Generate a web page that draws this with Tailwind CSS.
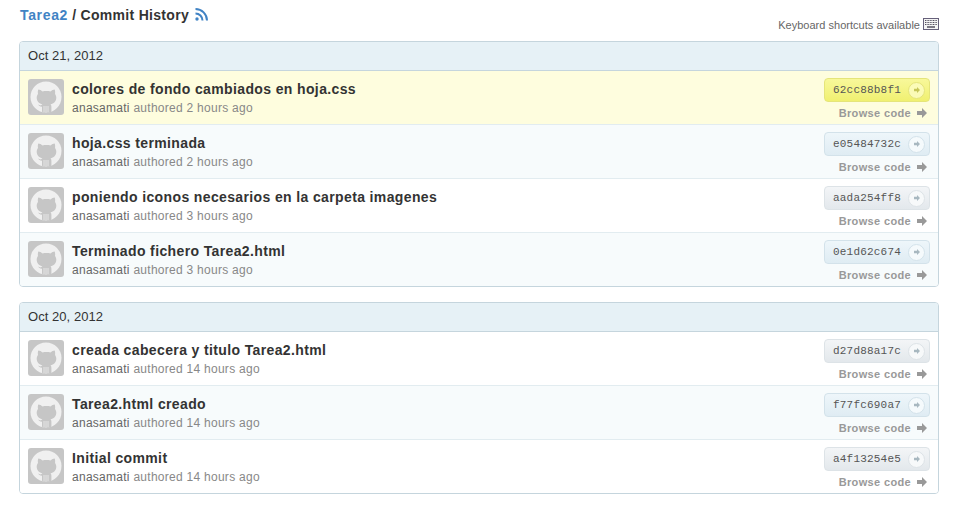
<!DOCTYPE html>
<html lang="en">
<head>
    <meta charset="UTF-8">
    <title>Commit History</title>
    <script src="https://cdn.jsdelivr.net/npm/@tailwindcss/browser@4"></script>
</head>
<body class="bg-white font-['Liberation_Sans',Arial,sans-serif] text-[#333] w-[957px] h-[526px] overflow-hidden">

    <!-- shared icons -->
    <svg class="hidden">
        <symbol id="octo" viewBox="0 0 36 36">
            <circle cx="18" cy="18" r="15.500" fill="#f0f0f0"/>
            <path d="M18 33.500c-1.500 0-3-.3-4-.7v-5.100c-2-.1-3.200-1-4-2.200l2.800.9 1.600-1.200c-3-.7-5.700-2.700-5.700-6.500 0-1.500.5-2.800 1.300-3.800-.3-1.100-.2-3 .3-4.400 1.500.1 3 .9 4.200 1.900 1.300-.3 2.800-.3 4-.3s2.700 0 4 .3c1.200-1 2.700-1.800 4.200-1.900.5 1.400.6 3.300.3 4.400.8 1 1.300 2.300 1.300 3.800 0 3.800-2.700 5.800-5.700 6.500.6.700.8 1.500.8 2.500v5.100c-1 .4-1.900.7-3.400.7z" fill="#c6c6c6"/>
            <path d="M16 27v6M18 27v6.500M20 27v6" stroke="#f0f0f0" stroke-width=".8" fill="none"/>
        </symbol>
        <symbol id="arrow" viewBox="0 0 10 10">
            <path d="M0 3h5V0l5 5-5 5V7H0z" fill="currentColor"/>
        </symbol>
    </svg>

    <div class="relative h-[41px]">
        <h1 class="absolute left-[20px] top-[6px] flex items-center text-[14px] leading-[18px] font-bold text-[#333] tracking-[0.3px]">
            <span class="text-[#4183c4] tracking-[0.65px]">Tarea2</span><span class="whitespace-pre"> / Commit History</span>
            <svg class="ml-[6px] w-[13px] h-[13px] mb-[2px]" viewBox="0 0 13 13">
                <circle cx="2" cy="11" r="1.700" fill="#4183c4"/>
                <path d="M0.500 5.500a7 7 0 0 1 7 7M0.500 1a11.500 11.500 0 0 1 11.500 11.500" fill="none" stroke="#4183c4" stroke-width="2"/>
            </svg>
        </h1>
        <div class="absolute right-[18px] top-[17px] flex items-center text-[11px] leading-[16px] text-[#666]">
            <span class="tracking-[0.02px]">Keyboard shortcuts available</span>
            <svg class="ml-[3px] w-[16px] h-[12px] mb-[3px]" viewBox="0 0 16 12">
                <rect x=".5" y=".5" width="15" height="11" fill="#f4f4f4" stroke="#66607a"/>
                <path d="M2 2.500h12M2 4.500h12M2 6.500h12" stroke="#55505f" stroke-dasharray="1 .6" fill="none"/>
                <path d="M4 9h8" stroke="#55505f" stroke-width="1.500"/>
            </svg>
        </div>
    </div>

    <div class="ml-[19px] w-[920px] border border-[#c5d5dd] rounded-[4px] overflow-hidden">
        <h3 class="h-[29px] px-[8px] flex items-center bg-[#e6f1f6] border-b border-[#c5d5dd] text-[13px] tracking-[0.05px] text-[#333]">Oct 21, 2012</h3>

        <div class="h-[54px] flex justify-between pl-[8px] pr-[8px] pt-[8px] bg-[#fefdde] border-b border-[#e2ecf0]">
            <svg class="w-[36px] h-[36px] bg-[#c6c6c6] rounded-[3px] shrink-0"><use href="#octo"/></svg>
            <div class="ml-[8px] flex-1 pt-[1px]">
                <p class="text-[14px] leading-[19px] font-bold text-[#333] tracking-[0.37px]">colores de fondo cambiados en hoja.css</p>
                <p class="text-[12px] leading-[18px] tracking-[0.27px] text-[#888]"><span class="text-[#666]">anasamati</span> authored 2 hours ago</p>
            </div>
            <div class="flex flex-col items-end -mt-[1px]">
                <div class="w-[106px] h-[24px] flex items-center justify-between pl-[8px] pr-[4px] rounded-[4px] border border-[#e5e57a] bg-linear-to-b from-[#f8f89a] to-[#f0f070] font-['Liberation_Mono',monospace] text-[11px] tracking-[0.2px] text-[#555]">62cc88b8f1<span class="w-[17px] h-[17px] rounded-full border border-[#e5e57a] bg-[#fbfbb8] flex items-center justify-center text-[#c6c65a]"><svg class="w-[6px] h-[6px]"><use href="#arrow"/></svg></span></div>
                <div class="mt-[3px] mr-[3px] flex items-center text-[11px] leading-[16px] font-bold tracking-[0.35px] text-[#999]">Browse code<svg class="ml-[6px] w-[10px] h-[10px]"><use href="#arrow"/></svg></div>
            </div>
        </div>

        <div class="h-[54px] flex justify-between pl-[8px] pr-[8px] pt-[8px] bg-[#f7fbfc] border-b border-[#e2ecf0]">
            <svg class="w-[36px] h-[36px] bg-[#c6c6c6] rounded-[3px] shrink-0"><use href="#octo"/></svg>
            <div class="ml-[8px] flex-1 pt-[1px]">
                <p class="text-[14px] leading-[19px] font-bold text-[#333] tracking-[0.37px]">hoja.css terminada</p>
                <p class="text-[12px] leading-[18px] tracking-[0.27px] text-[#888]"><span class="text-[#666]">anasamati</span> authored 2 hours ago</p>
            </div>
            <div class="flex flex-col items-end -mt-[1px]">
                <div class="w-[106px] h-[24px] flex items-center justify-between pl-[8px] pr-[4px] rounded-[4px] border border-[#d3e2ea] bg-linear-to-b from-[#eef6fa] to-[#dfecf3] font-['Liberation_Mono',monospace] text-[11px] tracking-[0.2px] text-[#555]">e05484732c<span class="w-[17px] h-[17px] rounded-full border border-[#d3e2ea] bg-[#f5fafc] flex items-center justify-center text-[#a8b8c0]"><svg class="w-[6px] h-[6px]"><use href="#arrow"/></svg></span></div>
                <div class="mt-[3px] mr-[3px] flex items-center text-[11px] leading-[16px] font-bold tracking-[0.35px] text-[#999]">Browse code<svg class="ml-[6px] w-[10px] h-[10px]"><use href="#arrow"/></svg></div>
            </div>
        </div>

        <div class="h-[54px] flex justify-between pl-[8px] pr-[8px] pt-[8px] bg-white border-b border-[#e2ecf0]">
            <svg class="w-[36px] h-[36px] bg-[#c6c6c6] rounded-[3px] shrink-0"><use href="#octo"/></svg>
            <div class="ml-[8px] flex-1 pt-[1px]">
                <p class="text-[14px] leading-[19px] font-bold text-[#333] tracking-[0.37px]">poniendo iconos necesarios en la carpeta imagenes</p>
                <p class="text-[12px] leading-[18px] tracking-[0.27px] text-[#888]"><span class="text-[#666]">anasamati</span> authored 3 hours ago</p>
            </div>
            <div class="flex flex-col items-end -mt-[1px]">
                <div class="w-[106px] h-[24px] flex items-center justify-between pl-[8px] pr-[4px] rounded-[4px] border border-[#dde3e7] bg-linear-to-b from-[#f3f5f7] to-[#e3e8ec] font-['Liberation_Mono',monospace] text-[11px] tracking-[0.2px] text-[#555]">aada254ff8<span class="w-[17px] h-[17px] rounded-full border border-[#dde3e7] bg-[#f7f9fa] flex items-center justify-center text-[#a8b8c0]"><svg class="w-[6px] h-[6px]"><use href="#arrow"/></svg></span></div>
                <div class="mt-[3px] mr-[3px] flex items-center text-[11px] leading-[16px] font-bold tracking-[0.35px] text-[#999]">Browse code<svg class="ml-[6px] w-[10px] h-[10px]"><use href="#arrow"/></svg></div>
            </div>
        </div>

        <div class="h-[53px] flex justify-between pl-[8px] pr-[8px] pt-[8px] bg-[#f7fbfc]">
            <svg class="w-[36px] h-[36px] bg-[#c6c6c6] rounded-[3px] shrink-0"><use href="#octo"/></svg>
            <div class="ml-[8px] flex-1 pt-[1px]">
                <p class="text-[14px] leading-[19px] font-bold text-[#333] tracking-[0.37px]">Terminado fichero Tarea2.html</p>
                <p class="text-[12px] leading-[18px] tracking-[0.27px] text-[#888]"><span class="text-[#666]">anasamati</span> authored 3 hours ago</p>
            </div>
            <div class="flex flex-col items-end -mt-[1px]">
                <div class="w-[106px] h-[24px] flex items-center justify-between pl-[8px] pr-[4px] rounded-[4px] border border-[#d3e2ea] bg-linear-to-b from-[#eef6fa] to-[#dfecf3] font-['Liberation_Mono',monospace] text-[11px] tracking-[0.2px] text-[#555]">0e1d62c674<span class="w-[17px] h-[17px] rounded-full border border-[#d3e2ea] bg-[#f5fafc] flex items-center justify-center text-[#a8b8c0]"><svg class="w-[6px] h-[6px]"><use href="#arrow"/></svg></span></div>
                <div class="mt-[3px] mr-[3px] flex items-center text-[11px] leading-[16px] font-bold tracking-[0.35px] text-[#999]">Browse code<svg class="ml-[6px] w-[10px] h-[10px]"><use href="#arrow"/></svg></div>
            </div>
        </div>
    </div>

    <div class="mt-[15px] ml-[19px] w-[920px] border border-[#c5d5dd] rounded-[4px] overflow-hidden">
        <h3 class="h-[29px] px-[8px] flex items-center bg-[#e6f1f6] border-b border-[#c5d5dd] text-[13px] tracking-[0.05px] text-[#333]">Oct 20, 2012</h3>

        <div class="h-[54px] flex justify-between pl-[8px] pr-[8px] pt-[8px] bg-white border-b border-[#e2ecf0]">
            <svg class="w-[36px] h-[36px] bg-[#c6c6c6] rounded-[3px] shrink-0"><use href="#octo"/></svg>
            <div class="ml-[8px] flex-1 pt-[1px]">
                <p class="text-[14px] leading-[19px] font-bold text-[#333] tracking-[0.37px]">creada cabecera y titulo Tarea2.html</p>
                <p class="text-[12px] leading-[18px] tracking-[0.27px] text-[#888]"><span class="text-[#666]">anasamati</span> authored 14 hours ago</p>
            </div>
            <div class="flex flex-col items-end -mt-[1px]">
                <div class="w-[106px] h-[24px] flex items-center justify-between pl-[8px] pr-[4px] rounded-[4px] border border-[#dde3e7] bg-linear-to-b from-[#f3f5f7] to-[#e3e8ec] font-['Liberation_Mono',monospace] text-[11px] tracking-[0.2px] text-[#555]">d27d88a17c<span class="w-[17px] h-[17px] rounded-full border border-[#dde3e7] bg-[#f7f9fa] flex items-center justify-center text-[#a8b8c0]"><svg class="w-[6px] h-[6px]"><use href="#arrow"/></svg></span></div>
                <div class="mt-[3px] mr-[3px] flex items-center text-[11px] leading-[16px] font-bold tracking-[0.35px] text-[#999]">Browse code<svg class="ml-[6px] w-[10px] h-[10px]"><use href="#arrow"/></svg></div>
            </div>
        </div>

        <div class="h-[54px] flex justify-between pl-[8px] pr-[8px] pt-[8px] bg-[#f7fbfc] border-b border-[#e2ecf0]">
            <svg class="w-[36px] h-[36px] bg-[#c6c6c6] rounded-[3px] shrink-0"><use href="#octo"/></svg>
            <div class="ml-[8px] flex-1 pt-[1px]">
                <p class="text-[14px] leading-[19px] font-bold text-[#333] tracking-[0.37px]">Tarea2.html creado</p>
                <p class="text-[12px] leading-[18px] tracking-[0.27px] text-[#888]"><span class="text-[#666]">anasamati</span> authored 14 hours ago</p>
            </div>
            <div class="flex flex-col items-end -mt-[1px]">
                <div class="w-[106px] h-[24px] flex items-center justify-between pl-[8px] pr-[4px] rounded-[4px] border border-[#d3e2ea] bg-linear-to-b from-[#eef6fa] to-[#dfecf3] font-['Liberation_Mono',monospace] text-[11px] tracking-[0.2px] text-[#555]">f77fc690a7<span class="w-[17px] h-[17px] rounded-full border border-[#d3e2ea] bg-[#f5fafc] flex items-center justify-center text-[#a8b8c0]"><svg class="w-[6px] h-[6px]"><use href="#arrow"/></svg></span></div>
                <div class="mt-[3px] mr-[3px] flex items-center text-[11px] leading-[16px] font-bold tracking-[0.35px] text-[#999]">Browse code<svg class="ml-[6px] w-[10px] h-[10px]"><use href="#arrow"/></svg></div>
            </div>
        </div>

        <div class="h-[53px] flex justify-between pl-[8px] pr-[8px] pt-[8px] bg-white">
            <svg class="w-[36px] h-[36px] bg-[#c6c6c6] rounded-[3px] shrink-0"><use href="#octo"/></svg>
            <div class="ml-[8px] flex-1 pt-[1px]">
                <p class="text-[14px] leading-[19px] font-bold text-[#333] tracking-[0.37px]">Initial commit</p>
                <p class="text-[12px] leading-[18px] tracking-[0.27px] text-[#888]"><span class="text-[#666]">anasamati</span> authored 14 hours ago</p>
            </div>
            <div class="flex flex-col items-end -mt-[1px]">
                <div class="w-[106px] h-[24px] flex items-center justify-between pl-[8px] pr-[4px] rounded-[4px] border border-[#dde3e7] bg-linear-to-b from-[#f3f5f7] to-[#e3e8ec] font-['Liberation_Mono',monospace] text-[11px] tracking-[0.2px] text-[#555]">a4f13254e5<span class="w-[17px] h-[17px] rounded-full border border-[#dde3e7] bg-[#f7f9fa] flex items-center justify-center text-[#a8b8c0]"><svg class="w-[6px] h-[6px]"><use href="#arrow"/></svg></span></div>
                <div class="mt-[3px] mr-[3px] flex items-center text-[11px] leading-[16px] font-bold tracking-[0.35px] text-[#999]">Browse code<svg class="ml-[6px] w-[10px] h-[10px]"><use href="#arrow"/></svg></div>
            </div>
        </div>
    </div>

</body>
</html>
